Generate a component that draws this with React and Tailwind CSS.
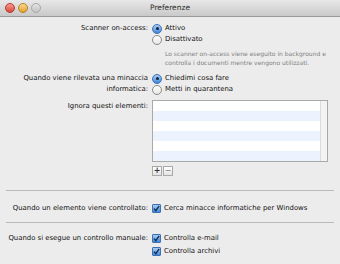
import React from "react";

const font = { fontFamily: '"DejaVu Sans", "Liberation Sans", sans-serif' };

function Radio({ on }) {
  return (
    <span
      className={
        "flex h-[10px] w-[10px] shrink-0 items-center justify-center rounded-full border " +
        (on
          ? "border-[#3d6fb4] bg-gradient-to-b from-[#a9cdf4] to-[#3f87da]"
          : "border-[#8a8a8a] bg-gradient-to-b from-[#ffffff] to-[#e6e6e6]")
      }
    >
      {on && <span className="h-[3px] w-[3px] rounded-full bg-[#14243a]" />}
    </span>
  );
}

function Check() {
  return (
    <span className="flex h-[9px] w-[9px] shrink-0 items-center justify-center rounded-[1px] border border-[#3d6fb4] bg-gradient-to-b from-[#a9cdf4] to-[#3f87da]">
      <svg width="7" height="7" viewBox="0 0 7 7">
        <path d="M1 3.6 L2.8 5.6 L6.2 0.8" fill="none" stroke="#142a44" strokeWidth="1.3" />
      </svg>
    </span>
  );
}

function Option({ children, control }) {
  return (
    <div className="flex h-[11px] items-center gap-[3px]">
      {control}
      <span>{children}</span>
    </div>
  );
}

export default function App() {
  return (
    <div className="h-[264px] w-[340px] overflow-hidden bg-[#ececec] text-[6.9px] text-[#111]" style={font}>
      {/* title bar */}
      <div className="relative flex h-[17px] items-center justify-center border-b border-[#9a9a9a] bg-gradient-to-b from-[#e8e8e8] to-[#c9c9c9]">
        <div className="absolute left-[5px] top-[3px] flex gap-[3px]">
          <span className="h-[10px] w-[10px] rounded-full border border-[#b33a30] bg-gradient-to-b from-[#f49a8c] to-[#d8453a]" />
          <span className="h-[10px] w-[10px] rounded-full border border-[#b8801c] bg-gradient-to-b from-[#fbd98c] to-[#e0a229]" />
          <span className="h-[10px] w-[10px] rounded-full border border-[#a8a8a8] bg-gradient-to-b from-[#e4e4e4] to-[#c2c2c2]" />
        </div>
        <span className="text-[7.5px] text-[#2a2a2a]">Preferenze</span>
      </div>

      <div className="grid grid-cols-[148px_1fr] gap-x-[4px] pt-[6px]">
        <div className="flex h-[11px] items-center justify-end">Scanner on-access:</div>
        <div>
          <Option control={<Radio on />}>Attivo</Option>
          <Option control={<Radio />}>Disattivato</Option>
          <div className="mt-[4px] pl-[13px] text-[6px] leading-[9px] text-[#808080]">
            Lo scanner on-access viene eseguito in background e
            <br />
            controlla i documenti mentre vengono utilizzati.
          </div>
        </div>

        <div className="mt-[6px] text-right leading-[11px]">
          Quando viene rilevata una minaccia
          <br />
          informatica:
        </div>
        <div className="mt-[6px]">
          <Option control={<Radio on />}>Chiedimi cosa fare</Option>
          <Option control={<Radio />}>Metti in quarantena</Option>
        </div>

        <div className="mt-[6px] flex h-[11px] items-center justify-end">Ignora questi elementi:</div>
        <div className="mt-[5px] pr-[12px]">
          <div className="flex h-[62px] border border-[#a9a9a9] bg-white">
            <div className="flex flex-1 flex-col">
              <div className="h-[10px]" />
              <div className="h-[10px] bg-[#ecf2fe]" />
              <div className="h-[10px]" />
              <div className="h-[10px] bg-[#ecf2fe]" />
              <div className="h-[10px]" />
              <div className="h-[10px] bg-[#ecf2fe]" />
            </div>
            <div className="w-[7px] border-l border-[#dcdcdc] bg-[#f3f3f3]" />
          </div>
          <div className="mt-[4px] flex gap-[1px]">
            <span className="flex h-[10px] w-[10px] items-center justify-center border border-[#a9a9a9] bg-gradient-to-b from-white to-[#e4e4e4] text-[8px] font-bold leading-none text-[#333]">
              +
            </span>
            <span className="flex h-[10px] w-[10px] items-center justify-center border border-[#a9a9a9] bg-gradient-to-b from-white to-[#e4e4e4] text-[8px] leading-none text-[#777]">
              −
            </span>
          </div>
        </div>
      </div>

      <div className="mx-[6px] mt-[14px] border-t border-[#b9b9b9]" />

      <div className="grid grid-cols-[148px_1fr] gap-x-[4px] pt-[12px]">
        <div className="flex h-[11px] items-center justify-end">Quando un elemento viene controllato:</div>
        <Option control={<Check />}>Cerca minacce informatiche per Windows</Option>
      </div>

      <div className="mx-[6px] mt-[8px] border-t border-[#b9b9b9]" />

      <div className="grid grid-cols-[148px_1fr] gap-x-[4px] pt-[10px]">
        <div className="flex h-[11px] items-center justify-end">Quando si esegue un controllo manuale:</div>
        <div className="flex flex-col gap-[2px]">
          <Option control={<Check />}>Controlla e-mail</Option>
          <Option control={<Check />}>Controlla archivi</Option>
        </div>
      </div>
    </div>
  );
}
